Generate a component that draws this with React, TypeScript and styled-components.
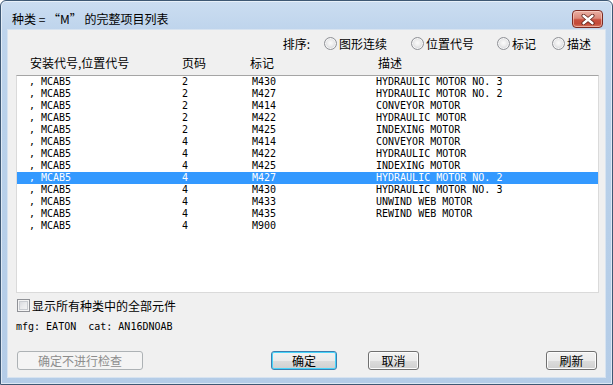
import React from 'react';
import styled, { createGlobalStyle } from 'styled-components';

const GlobalStyle = createGlobalStyle`
  html, body {
    margin: 0;
    padding: 0;
    background: #ffffff;
  }
  * {
    box-sizing: border-box;
  }
`;

const uiFont = `"Noto Sans CJK SC", "Liberation Sans", sans-serif`;
const monoFont = `"DejaVu Sans Mono", "Liberation Mono", monospace`;

interface Part {
    place: string;
    page: string;
    tag: string;
    desc: string;
}

const parts: Part[] = [
    { place: ', MCAB5', page: '2', tag: 'M430', desc: 'HYDRAULIC MOTOR NO. 3' },
    { place: ', MCAB5', page: '2', tag: 'M427', desc: 'HYDRAULIC MOTOR NO. 2' },
    { place: ', MCAB5', page: '2', tag: 'M414', desc: 'CONVEYOR MOTOR' },
    { place: ', MCAB5', page: '2', tag: 'M422', desc: 'HYDRAULIC MOTOR' },
    { place: ', MCAB5', page: '2', tag: 'M425', desc: 'INDEXING MOTOR' },
    { place: ', MCAB5', page: '4', tag: 'M414', desc: 'CONVEYOR MOTOR' },
    { place: ', MCAB5', page: '4', tag: 'M422', desc: 'HYDRAULIC MOTOR' },
    { place: ', MCAB5', page: '4', tag: 'M425', desc: 'INDEXING MOTOR' },
    { place: ', MCAB5', page: '4', tag: 'M427', desc: 'HYDRAULIC MOTOR NO. 2' },
    { place: ', MCAB5', page: '4', tag: 'M430', desc: 'HYDRAULIC MOTOR NO. 3' },
    { place: ', MCAB5', page: '4', tag: 'M433', desc: 'UNWIND WEB MOTOR' },
    { place: ', MCAB5', page: '4', tag: 'M435', desc: 'REWIND WEB MOTOR' },
    { place: ', MCAB5', page: '4', tag: 'M900', desc: '' },
];

const SELECTED = 8;

const Window = styled.div`
  width: 613px;
  height: 385px;
  border: 1px solid #3e5874;
  border-radius: 6px 6px 0 0;
  background: linear-gradient(180deg, #cbddf1 0px, #bed4ec 30px, #b9d1ea 120px, #b4cce7 100%);
  box-shadow: inset 0 0 0 1px rgba(255, 255, 255, 0.55);
  display: flex;
  flex-direction: column;
  overflow: hidden;
`;

const TitleBar = styled.div`
  height: 29px;
  flex: none;
  display: flex;
  align-items: flex-start;
  justify-content: space-between;
`;

const Title = styled.div`
  margin: 11px 0 0 11px;
  font-family: ${uiFont};
  font-size: 12px;
  line-height: 14px;
  color: #000;
  white-space: pre;
`;

const CloseButton = styled.div`
  margin: 9px 9px 0 0;
  width: 31px;
  height: 18px;
  border: 1px solid #7b2b23;
  border-radius: 4px;
  background: linear-gradient(180deg, #eab0a4 0%, #dc8a7b 45%, #c8503f 55%, #c34a38 80%, #d7765f 100%);
  box-shadow: inset 0 0 0 1px rgba(255, 220, 210, 0.55);
  display: flex;
  align-items: center;
  justify-content: center;
`;

const Client = styled.div`
  flex: none;
  margin: 0 7px;
  height: 347px;
  background: #f0f0f0;
  box-shadow: 0 0 0 1px #d7e3f0;
  display: flex;
  flex-direction: column;
`;

const SortBar = styled.div`
  margin-top: 4px;
  height: 18px;
  display: flex;
  align-items: center;
  justify-content: flex-end;
  padding-right: 14px;
  font-family: ${uiFont};
  font-size: 12px;
  color: #000;
`;

const SortLabel = styled.span`
  margin-right: 14px;
`;

const RadioItem = styled.label<{ $w?: number }>`
  display: flex;
  align-items: center;
  width: ${(p) => (p.$w ? `${p.$w}px` : 'auto')};
  white-space: nowrap;
`;

const RadioDot = styled.span`
  width: 13px;
  height: 13px;
  margin-right: 2px;
  border-radius: 50%;
  border: 1px solid #8f9196;
  background: radial-gradient(circle at 50% 45%, #fbfbfb 0%, #eeeeee 35%, #d2d4d8 75%, #c8cacd 100%);
  box-shadow: inset 0 0 0 1px #f6f6f6;
  flex: none;
`;

const HeaderRow = styled.div`
  margin-top: 4px;
  height: 14px;
  display: grid;
  grid-template-columns: 152px 68px 128px 1fr;
  padding-left: 22px;
  font-family: ${uiFont};
  font-size: 12px;
  line-height: 14px;
  color: #000;
  white-space: pre;
`;

const ListBox = styled.div`
  margin: 5px 6px 0 8px;
  height: 218px;
  background: #ffffff;
  border: 1px solid #dadada;
  border-top-color: #a5a5a5;
  overflow: hidden;
`;

const Row = styled.div<{ $selected?: boolean }>`
  height: 12px;
  display: grid;
  grid-template-columns: 153px 70px 124px 1fr;
  padding-left: 12px;
  font-family: ${monoFont};
  font-size: 10px;
  line-height: 12px;
  white-space: pre;
  color: ${(p) => (p.$selected ? '#ffffff' : '#000000')};
  background: ${(p) => (p.$selected ? '#3399ff' : 'transparent')};
`;

const CheckRow = styled.label`
  margin: 6px 0 0 9px;
  height: 13px;
  display: flex;
  align-items: center;
  font-family: ${uiFont};
  font-size: 12px;
  line-height: 13px;
  color: #000;
`;

const CheckBox = styled.span`
  width: 13px;
  height: 13px;
  margin-right: 2px;
  border: 1px solid #8f9196;
  background: linear-gradient(135deg, #d0d3d8 0%, #e9eaec 50%, #f7f7f7 100%);
  box-shadow: inset 0 0 0 1px #f4f4f4, inset 0 0 0 2px #c9ccd1;
  flex: none;
`;

const InfoLine = styled.div`
  margin: 9px 0 0 8px;
  height: 12px;
  font-family: ${monoFont};
  font-size: 10px;
  line-height: 12px;
  color: #000;
  white-space: pre;
`;

const ButtonBar = styled.div`
  margin-top: 18px;
  display: flex;
  align-items: center;
  padding: 0 8px 0 9px;
`;

type ButtonKind = 'normal' | 'default' | 'disabled';

const Button = styled.div<{ $w: number; $kind?: ButtonKind; $ml?: string }>`
  width: ${(p) => p.$w}px;
  height: 19px;
  margin-left: ${(p) => p.$ml || '0'};
  border-radius: 3px;
  display: flex;
  align-items: center;
  justify-content: center;
  font-family: ${uiFont};
  font-size: 12px;
  line-height: 14px;
  border: 1px solid
    ${(p) => (p.$kind === 'default' ? '#3c7fb1' : p.$kind === 'disabled' ? '#adb2b5' : '#707070')};
  color: ${(p) => (p.$kind === 'disabled' ? '#8d8d8d' : '#000')};
  background: ${(p) =>
    p.$kind === 'disabled'
        ? '#f4f4f4'
        : 'linear-gradient(180deg, #f2f2f2 0%, #ebebeb 50%, #dddddd 50%, #cfcfcf 100%)'};
  box-shadow: ${(p) =>
    p.$kind === 'default'
        ? 'inset 0 0 0 1px #48d4fa'
        : p.$kind === 'disabled'
            ? 'none'
            : 'inset 0 0 0 1px #fcfcfc'};
`;

function CloseGlyph() {
    return (
        <svg width="14" height="11" viewBox="0 0 14 11">
            <path d="M2.5 1.8 L11.5 9.2 M11.5 1.8 L2.5 9.2" stroke="#5b2018" strokeWidth="4" strokeLinecap="round" />
            <path d="M2.5 1.8 L11.5 9.2 M11.5 1.8 L2.5 9.2" stroke="#ffffff" strokeWidth="2.4" strokeLinecap="round" />
        </svg>
    );
}

function Radio({ label, w }: { label: string; w?: number }) {
    return (
        <RadioItem $w={w}>
            <RadioDot />
            {label}
        </RadioItem>
    );
}

export default function App() {
    return (
        <>
            <GlobalStyle />
            <Window>
                <TitleBar>
                    <Title>种类 = “M” 的完整项目列表</Title>
                    <CloseButton>
                        <CloseGlyph />
                    </CloseButton>
                </TitleBar>
                <Client>
                    <SortBar>
                        <SortLabel>排序:</SortLabel>
                        <Radio label="图形连续" w={87} />
                        <Radio label="位置代号" w={86} />
                        <Radio label="标记" w={55} />
                        <Radio label="描述" />
                    </SortBar>
                    <HeaderRow>
                        <span>安装代号,位置代号</span>
                        <span>页码</span>
                        <span>标记</span>
                        <span>描述</span>
                    </HeaderRow>
                    <ListBox>
                        {parts.map((p, i) => (
                            <Row key={i} $selected={i === SELECTED}>
                                <span>{p.place}</span>
                                <span>{p.page}</span>
                                <span>{p.tag}</span>
                                <span>{p.desc}</span>
                            </Row>
                        ))}
                    </ListBox>
                    <CheckRow>
                        <CheckBox />
                        显示所有种类中的全部元件
                    </CheckRow>
                    <InfoLine>mfg: EATON  cat: AN16DNOAB</InfoLine>
                    <ButtonBar>
                        <Button $w={126} $kind="disabled">确定不进行检查</Button>
                        <Button $w={66} $kind="default" $ml="128px">确定</Button>
                        <Button $w={51} $ml="31px">取消</Button>
                        <Button $w={51} $ml="auto">刷新</Button>
                    </ButtonBar>
                </Client>
            </Window>
        </>
    );
}
